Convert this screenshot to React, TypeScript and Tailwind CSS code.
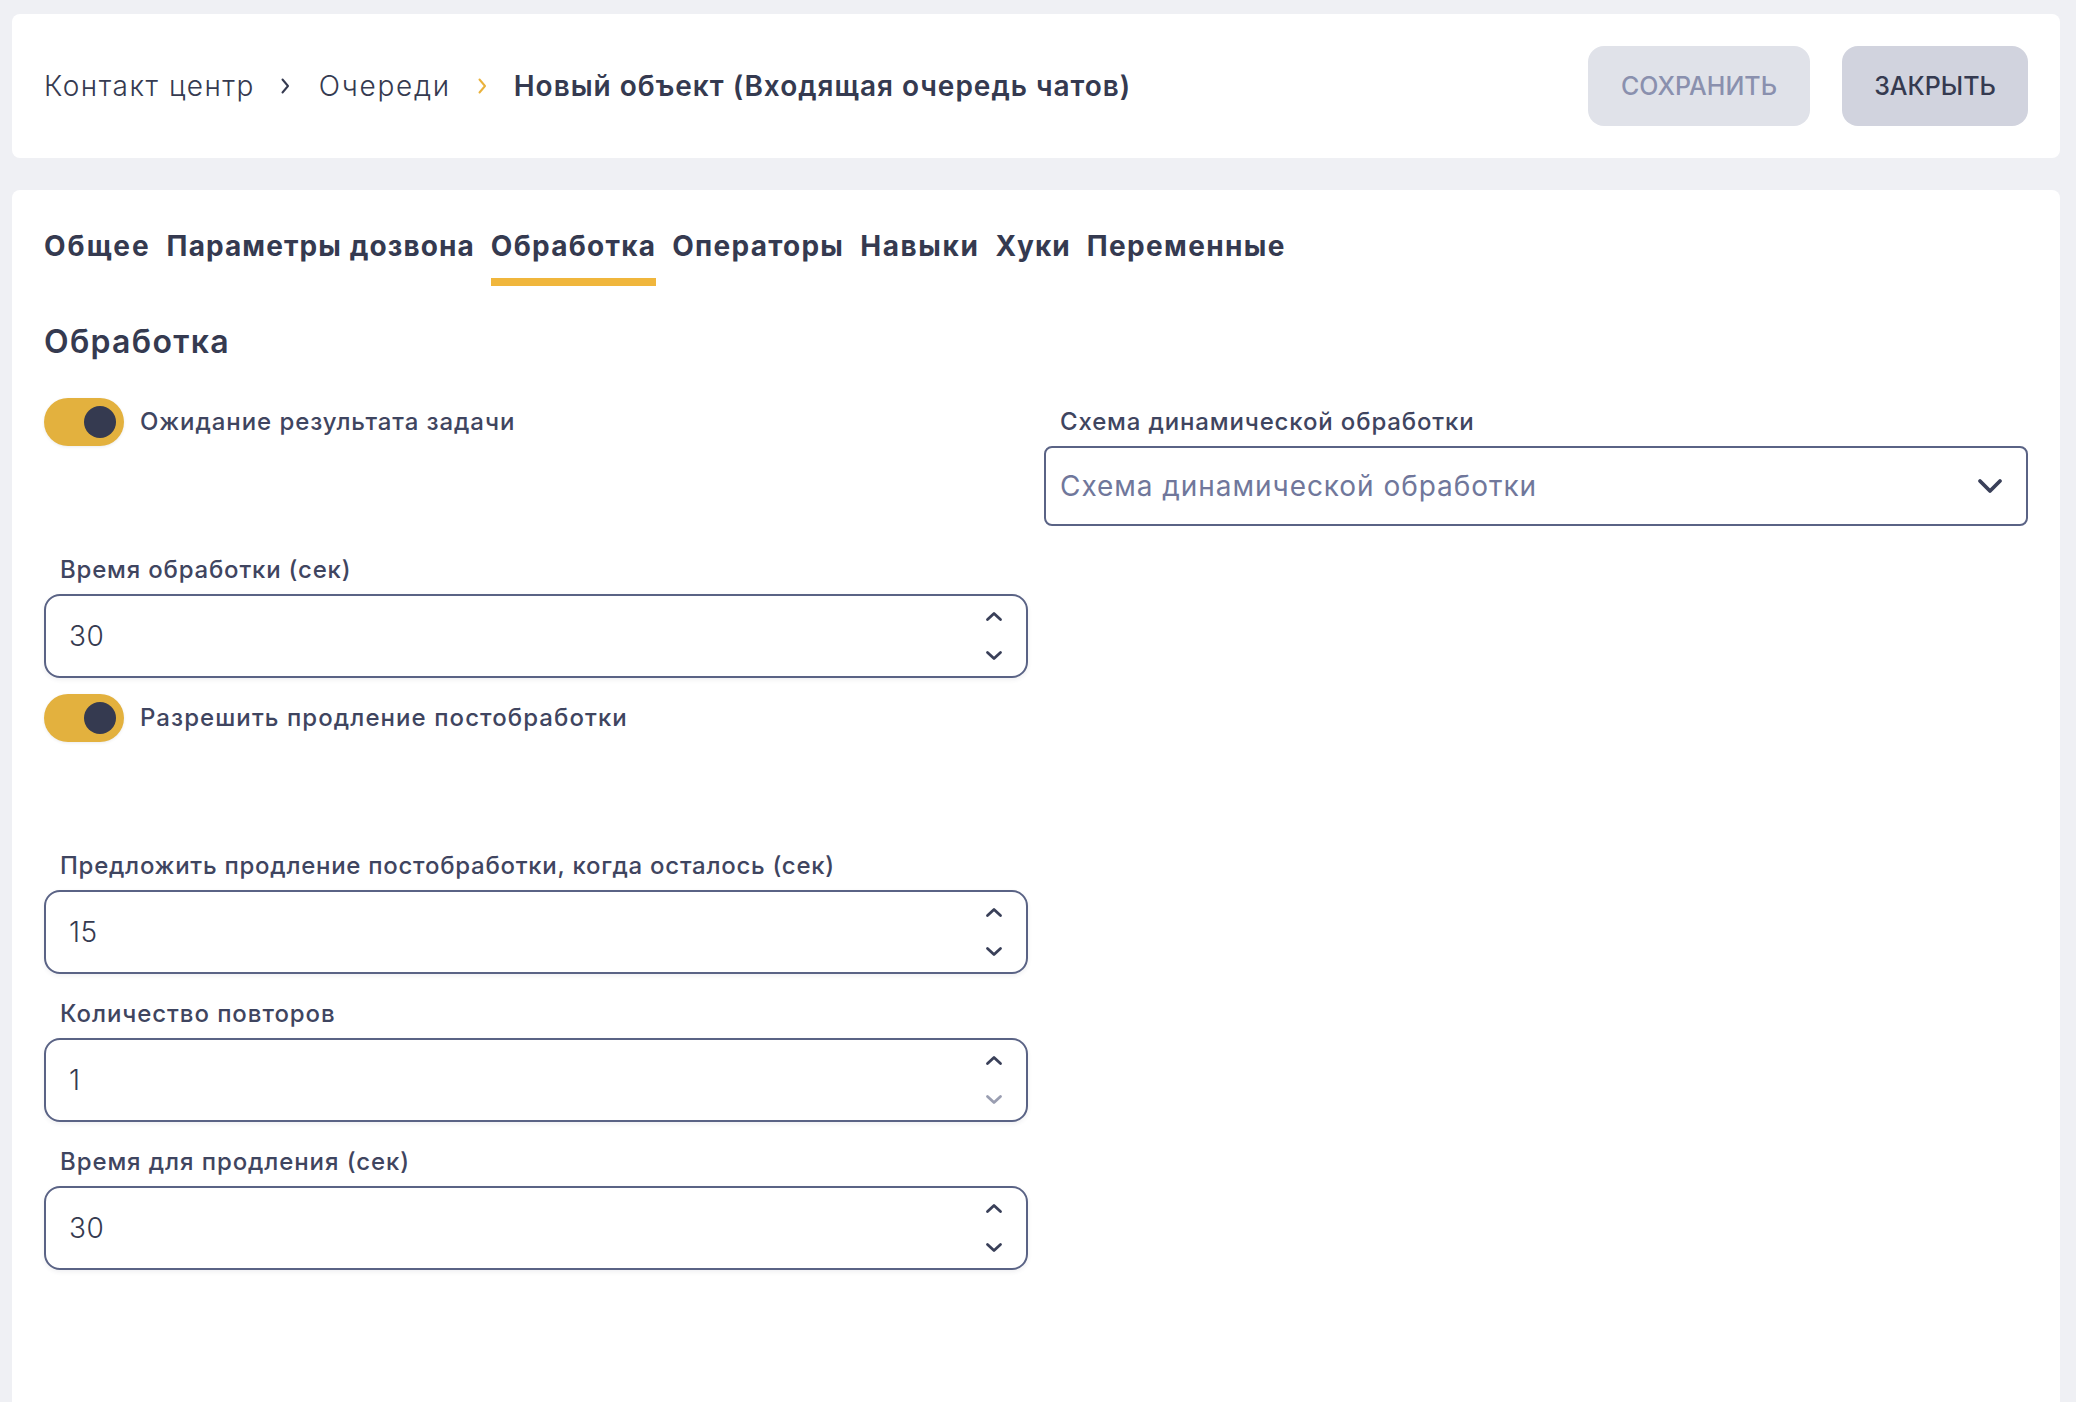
import React from "react";

const Chevron = ({ up = false, muted = false }: { up?: boolean; muted?: boolean }) => (
  <svg width="18" height="11" viewBox="0 0 18 11" fill="none" className={muted ? "text-[#9a9eb1]" : "text-[#3a4059]"}>
    <path d={up ? "M2.5 8.5 L9 2.5 L15.5 8.5" : "M2.5 2.5 L9 8.5 L15.5 2.5"} stroke="currentColor" strokeWidth="2.8" strokeLinecap="round" strokeLinejoin="round" />
  </svg>
);

const Crumb = ({ orange = false }: { orange?: boolean }) => (
  <svg width="10" height="18" viewBox="0 0 10 18" fill="none" className={orange ? "text-[#eab23c]" : "text-[#353a50]"}>
    <path d="M2.5 2.5 L8 9 L2.5 15.5" stroke="currentColor" strokeWidth="2" strokeLinecap="round" strokeLinejoin="round" />
  </svg>
);

const Toggle = ({ label, tracking }: { label: string; tracking: string }) => (
  <div className="flex items-start gap-4">
    <div className="flex h-12 w-20 items-center justify-end rounded-full bg-[#e3b13e] pr-2 shadow-[0_1px_3px_rgba(60,66,90,0.1)]">
      <div className="h-8 w-8 rounded-full bg-[#353a50]" />
    </div>
    <span className={`mt-3 text-[24px] leading-6 font-medium text-[#3f4560] ${tracking}`}>{label}</span>
  </div>
);

const NumberField = ({ label, value, tracking, downMuted = false }: { label: string; value: string; tracking: string; downMuted?: boolean }) => (
  <div className="pt-3">
    <div className={`mb-3 pl-4 text-[24px] leading-6 font-medium text-[#3f4560] ${tracking}`}>{label}</div>
    <div className="flex h-[84px] items-center justify-between rounded-2xl border-2 border-[#5a6385] pr-[23px] pl-[23px] shadow-[0_2px_4px_rgba(60,66,90,0.08)]">
      <span className="text-[28px] font-light tracking-[0.5px] text-[#353a50]">{value}</span>
      <div className="flex flex-col items-center gap-[28px]">
        <Chevron up />
        <Chevron muted={downMuted} />
      </div>
    </div>
  </div>
);

const tabs = [
  { t: "Общее", cls: "tracking-[2px]" },
  { t: "Параметры дозвона", cls: "tracking-[1.1px]" },
  { t: "Обработка", cls: "tracking-[1.25px]" },
  { t: "Операторы", cls: "tracking-[1.25px]" },
  { t: "Навыки", cls: "tracking-[1.6px]" },
  { t: "Хуки", cls: "tracking-[1px]" },
  { t: "Переменные", cls: "tracking-[1.35px]" },
];

export default function App() {
  return (
    <div className="flex h-[1402px] flex-col gap-8 overflow-hidden bg-[#eff0f4] pt-[14px] pr-4 pl-3 font-['Inter','Liberation_Sans',sans-serif] text-[#353a50]">
      <header className="flex h-[144px] shrink-0 items-center justify-between rounded-lg bg-white pr-8 pl-8">
        <nav className="flex items-center text-[28px]">
          <span className="font-light tracking-[1.5px] text-[#353a50]">Контакт центр</span>
          <span className="mr-[29px] ml-[25px] flex"><Crumb /></span>
          <span className="font-light tracking-[1.7px] text-[#353a50]">Очереди</span>
          <span className="mr-[27px] ml-[26px] flex"><Crumb orange /></span>
          <span className="font-semibold tracking-[0.98px] text-[#353a50]">Новый объект (Входящая очередь чатов)</span>
        </nav>
        <div className="flex gap-8">
          <button className="flex h-20 w-[222px] items-center justify-center rounded-2xl bg-[#e0e2e9] pt-px text-[25px] font-medium text-[#8a90ae]">СОХРАНИТЬ</button>
          <button className="flex h-20 w-[186px] items-center justify-center rounded-2xl bg-[#d1d3de] pt-px text-[25px] font-medium text-[#353a50]">ЗАКРЫТЬ</button>
        </div>
      </header>

      <main className="flex-1 rounded-t-lg bg-white px-8 pt-8">
        <div className="flex gap-4">
          {tabs.map(({ t, cls }) => (
            <div key={t} className={t === "Обработка" ? "border-b-8 border-[#f0b63c] pb-2" : "border-b-8 border-transparent pb-2"}>
              <span className={`block text-[28px] leading-[48px] font-bold text-[#353a50] ${cls}`}>{t}</span>
            </div>
          ))}
        </div>
        <h2 className="mt-9 text-[32px] leading-10 font-semibold tracking-[1.3px] text-[#353a50]">Обработка</h2>
        <div className="mt-9 grid grid-cols-2 auto-rows-[148px] gap-x-4">
          <Toggle label="Ожидание результата задачи" tracking="tracking-[0.92px]" />
          <div className="pt-3">
            <div className="mb-3 pl-4 text-[24px] leading-6 font-medium tracking-[0.85px] text-[#3f4560]">Схема динамической обработки</div>
            <div className="flex h-20 items-center justify-between rounded-lg border-2 border-[#5a6385] pr-[23px] pl-[14px]">
              <span className="text-[28px] tracking-[0.95px] text-[#70779b]">Схема динамической обработки</span>
              <svg width="26" height="16" viewBox="0 0 26 16" fill="none" className="text-[#3a4059]">
                <path d="M3 3 L13 13 L23 3" stroke="currentColor" strokeWidth="3.8" strokeLinecap="round" strokeLinejoin="round" />
              </svg>
            </div>
          </div>
          <NumberField label="Время обработки (сек)" value="30" tracking="tracking-[0.8px]" />
          <div />
          <Toggle label="Разрешить продление постобработки" tracking="tracking-[1.07px]" />
          <div />
          <NumberField label="Предложить продление постобработки, когда осталось (сек)" value="15" tracking="tracking-[0.73px]" />
          <div />
          <NumberField label="Количество повторов" value="1" downMuted tracking="tracking-[0.93px]" />
          <div />
          <NumberField label="Время для продления (сек)" value="30" tracking="tracking-[0.9px]" />
        </div>
      </main>
    </div>
  );
}
